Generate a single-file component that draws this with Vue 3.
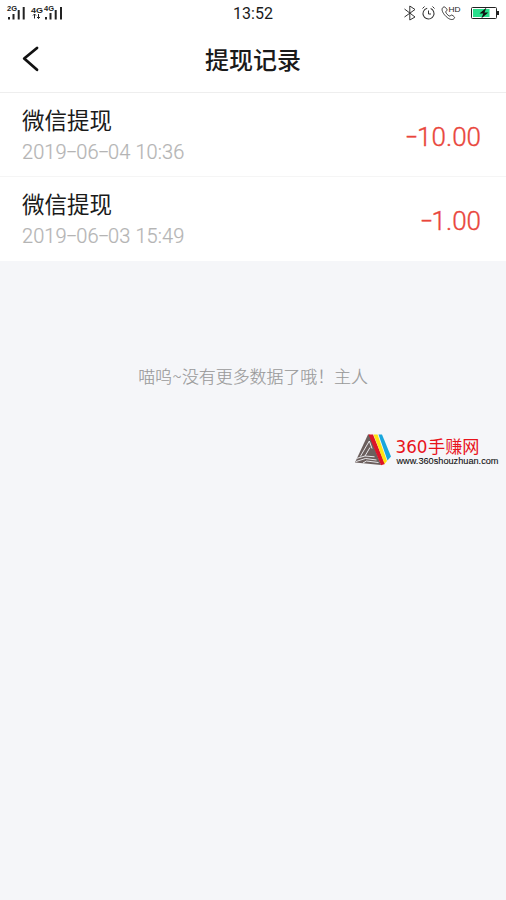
<script setup>
const records = [
  { title: '微信提现', date: '2019-06-04', time: '10:36', amount: '10.00' },
  { title: '微信提现', date: '2019-06-03', time: '15:49', amount: '1.00' },
]
</script>

<template>
  <main class="page">
    <header class="status">
      <svg class="signals" width="66" height="26" viewBox="0 0 66 26">
        <text x="7" y="11" class="net" textLength="10" lengthAdjust="spacingAndGlyphs">2G</text>
        <path class="bars" d="M9 17v2.500M13.500 14v5.500M18.700 10v9.500M23.700 7v12.500M46 17v2.500M50.500 13v6.500M55.700 10v9.500M61 7v12.500" />
        <text x="31" y="12.500" class="net large" textLength="12" lengthAdjust="spacingAndGlyphs">4G</text>
        <text x="44" y="11" class="net" textLength="10" lengthAdjust="spacingAndGlyphs">4G</text>
        <path class="arrows" d="M34.500 18.500v-4.500M33 15.500l1.500-1.500 1.500 1.500M38.500 14v4.500M37 17l1.500 1.500 1.500-1.500" />
      </svg>
      <time class="clock">13:52</time>
      <svg class="device" width="106" height="26" viewBox="400 0 106 26">
        <g class="thin">
          <path d="M404.500 9l10.500 8-5.200 3V6l5.200 3.500-10.500 7.500" />
          <circle cx="428.500" cy="13.500" r="5.500" stroke-dasharray="30.200 4.360" transform="rotate(-67 428.500 13.500)" />
          <path d="M428.500 10.500V14h2.500M422.500 8.500l2-2M434.500 8.500l-2-2" />
          <path d="M442.500 8c1.500-2 3-1 4.500 1.500.5 1-1.500 1.700-1.200 2.700.6 1.600 2 3 3.500 3.800 1 .5 1.800-1.500 2.800-.8 2.600 1.500 3.200 2.500 1.500 3.800-2.300 1.600-5.800-.6-8.300-3.300-2.500-2.600-4-6-2.800-7.700z" />
        </g>
        <text x="448.500" y="12.300" class="hd" textLength="12" lengthAdjust="spacingAndGlyphs">HD</text>
        <rect x="471.500" y="7.500" width="25" height="11" rx="1" fill="#fff" stroke="#222" />
        <path d="M497 11h2v4h-2z" fill="#222" />
        <path d="M473 9h16.500v8H473z" fill="#29df8b" />
        <path d="M486.500 7.500l-7 6h3.800l-2 5 7-6h-3.800z" fill="#111" />
      </svg>
    </header>

    <nav class="nav">
      <svg class="back" width="20" height="28" viewBox="0 0 20 28">
        <path d="M16 3L3.200 13.500 16 24.800" />
      </svg>
      <h1>提现记录</h1>
    </nav>

    <ul class="records">
      <li v-for="record in records" :key="record.date" class="record">
        <div class="info">
          <span class="title">{{ record.title }}</span>
          <span class="date">
            <template v-for="(part, i) in record.date.split('-')" :key="i"><span v-if="i" class="dash">-</span>{{ part }}</template>
            <span class="time">{{ record.time }}</span>
          </span>
        </div>
        <span class="amount"><span class="minus">-</span>{{ record.amount }}</span>
      </li>
    </ul>

    <p class="end">喵呜<span class="tilde">~</span>没有更多数据了哦！主人</p>

    <div class="brand">
      <svg width="146" height="36" viewBox="354 431 146 36">
        <path d="M368 434.500h1.500l11.500 30.500-26-2.500z" fill="#6b5f5d" />
        <path d="M369.300 441l-9 15.500M370 447.500l-5 8.500M357 458.300l8-2.300 9.500.8M356 461.500l9.500-3 11 1.500M363 463l3.500-2 12 1.500M369.300 441l2.700 7.500" fill="none" stroke="#f5f6f9" stroke-width=".9" />
        <path d="M368.500 434.500h4.500l12 29.500-4 1.300z" fill="#dc1428" />
        <path d="M373.500 434.500h4l9.500 26.500-2.500 3z" fill="#ffe312" />
        <path d="M378.500 434.500h3.500l9 22-3.500 4z" fill="#19a6dc" />
        <text x="395.500" y="453" class="brand-digits" textLength="32" lengthAdjust="spacingAndGlyphs">360</text>
        <text x="428" y="453" class="brand-name" textLength="51.500" lengthAdjust="spacingAndGlyphs">手赚网</text>
        <text x="396.500" y="464" class="brand-url" textLength="102" lengthAdjust="spacingAndGlyphs">www.360shouzhuan.com</text>
      </svg>
    </div>
  </main>
</template>

<style>
body { background: #f5f6f9; }
</style>

<style scoped>
.page {
  min-height: 900px;
  background: #f5f6f9;
  color: #1a1a1a;
  font-family: Roboto, "Noto Sans CJK SC", sans-serif;
}
.status {
  display: grid;
  grid-template-columns: 106px 1fr 106px;
  height: 26px;
  background: #fff;
}
.clock {
  text-align: center;
  font: 16px/28px Roboto, sans-serif;
}
.net { font: bold 6.500px "Liberation Sans", sans-serif; fill: #222; }
.large { font-size: 8px; }
.hd { font: 8px "Liberation Sans", sans-serif; fill: #222; }
.bars { fill: none; stroke: #222; stroke-width: 2; }
.arrows { fill: none; stroke: #222; stroke-width: 1; }
.thin { fill: none; stroke: #333; stroke-width: 1; }
.nav {
  display: grid;
  grid-template-columns: 40px 1fr 40px;
  align-items: center;
  height: 66px;
  box-sizing: border-box;
  background: #fff;
}
.back { margin-left: 21px; }
.back path {
  fill: none;
  stroke: #111;
  stroke-width: 2.800;
  stroke-linecap: round;
  stroke-linejoin: round;
}
.nav h1 {
  margin: 4px 0 0;
  text-align: center;
  font-size: 24px;
  line-height: 34px;
  font-weight: 500;
}
.records { margin: 0; padding: 0; list-style: none; }
.record {
  display: flex;
  justify-content: space-between;
  height: 85px;
  box-sizing: border-box;
  padding: 12px 25px 0 22px;
  border-top: 1px solid #f5f5f5;
  background: #fff;
}
.record:first-child { border-top-color: #eee; height: 84px; }
.info { display: flex; flex-direction: column; }
.title { font-size: 22.500px; line-height: 32px; }
.date {
  display: flex;
  font-size: 20px;
  line-height: 31px;
  font-weight: 300;
  letter-spacing: .08px;
  color: #b4b4b4;
  -webkit-text-stroke: .2px #b4b4b4;
}
.dash { width: 9.500px; text-align: center; transform: translateY(-1px) scaleX(1.700); }
.time { margin-left: 5px; }
.amount {
  display: flex;
  margin-top: 14px;
  font-size: 26px;
  line-height: 36px;
  font-weight: 300;
  color: #e9453b;
  -webkit-text-stroke: .35px #e9453b;
}
.minus { width: 11px; text-align: center; transform: translateY(-1px) scaleX(1.500); }
.end {
  margin: 103px 0 0;
  text-align: center;
  font: 300 17px/24px "Noto Sans CJK SC", sans-serif;
  letter-spacing: -.1px;
  color: #999;
  -webkit-text-stroke: .15px #999;
}
.tilde { display: inline-block; width: 10px; }
.brand { display: flex; justify-content: flex-end; margin-top: 43px; padding-right: 6px; }
.brand-digits { font: 18px "DejaVu Sans", sans-serif; fill: #e8141c; }
.brand-name { font: 17px "Noto Sans CJK SC", sans-serif; fill: #e8141c; }
.brand-url { font: 8.500px "Liberation Sans", sans-serif; fill: #111; stroke: #111; stroke-width: .1; }
</style>
